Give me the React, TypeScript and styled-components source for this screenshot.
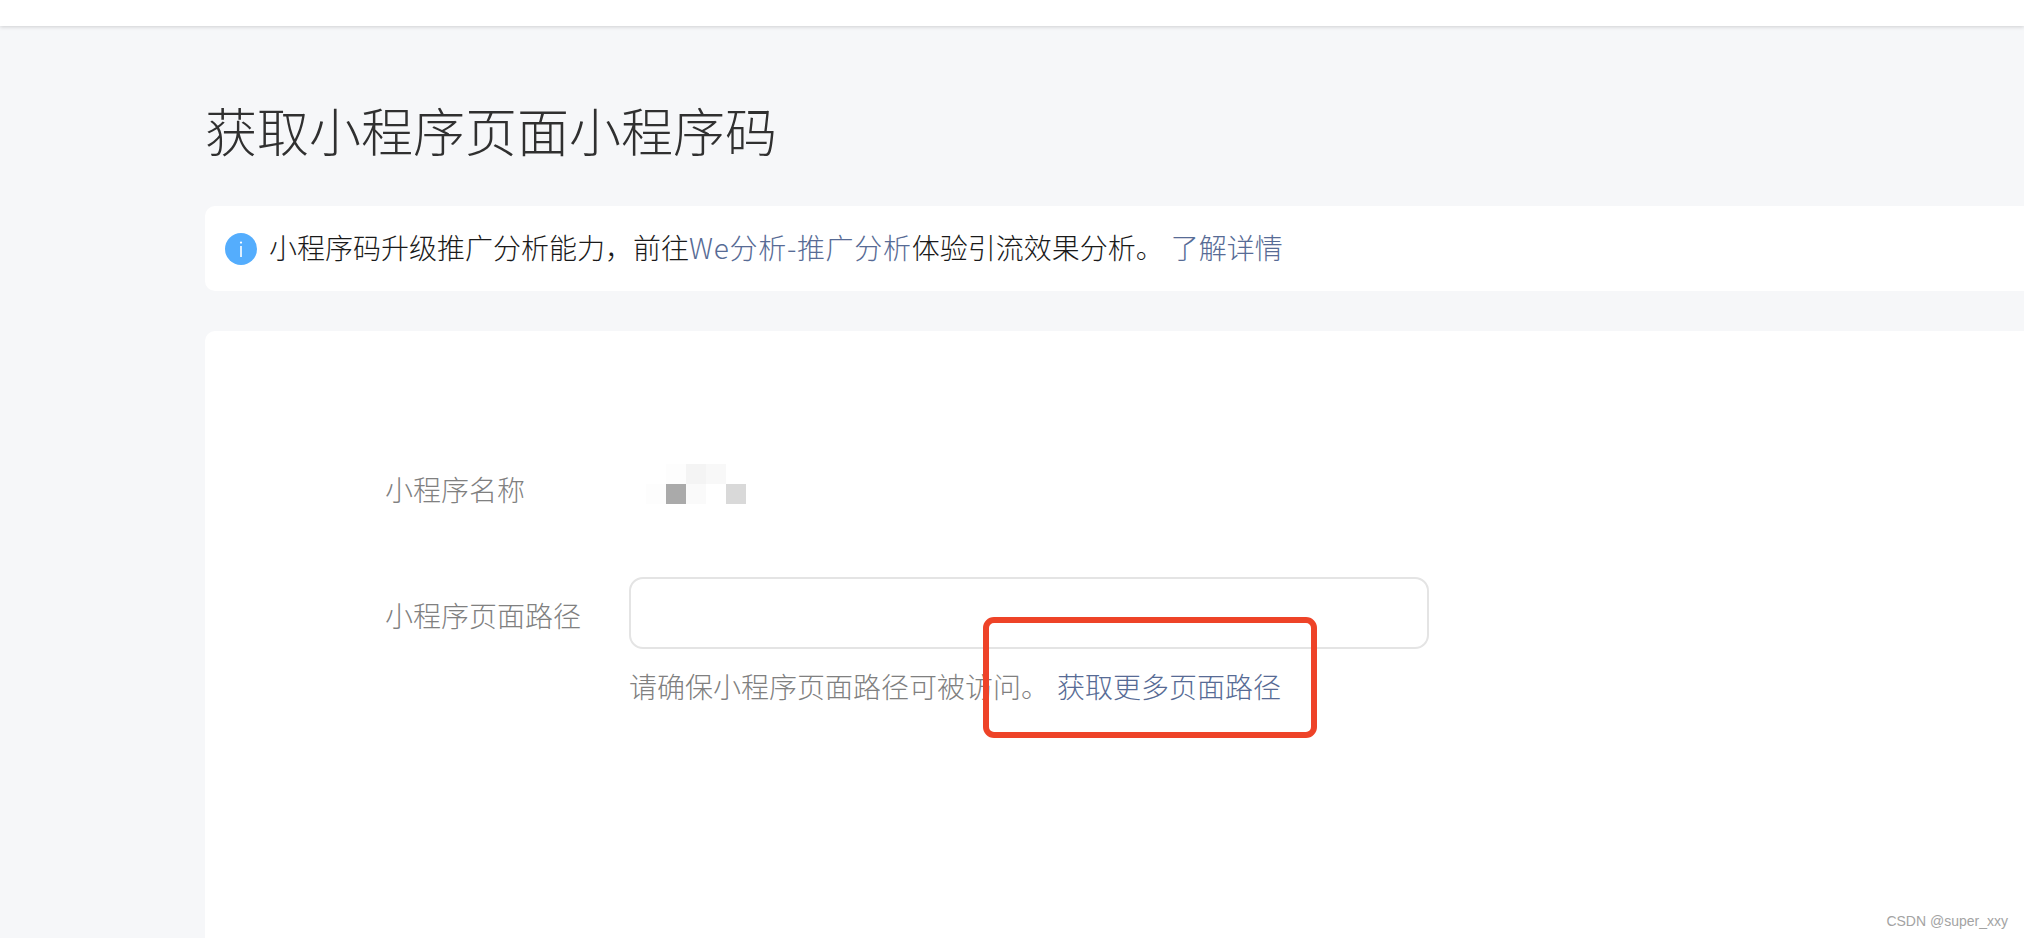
import React from 'react'
import styled, { createGlobalStyle } from 'styled-components'

const mosaicCells = [
  '#ffffff', '#fdfdfd', '#f4f4f4', '#f8f8f8', '#ffffff',
  '#fdfdfd', '#aaaaaa', '#fafafa', '#ffffff', '#d9d9d9',
]

export default function App() {
  return (
    <Page>
      <GlobalStyle />
      <TopBar />
      <Main>
        <Title>获取小程序页面小程序码</Title>
        <Notice>
          <InfoIcon viewBox="0 0 32 32">
            <circle cx="16" cy="16" r="16" fill="#54adfd" />
            <circle cx="16" cy="9.6" r="1.1" fill="#fff" />
            <rect x="15.2" y="13" width="1.6" height="11" fill="#fff" />
          </InfoIcon>
          <NoticeText>
            小程序码升级推广分析能力，前往<NoticeLink>We分析-推广分析</NoticeLink>体验引流效果分析。
            <NoticeMore>了解详情</NoticeMore>
          </NoticeText>
        </Notice>
        <Card>
          <NameRow>
            <NameLabel>小程序名称</NameLabel>
            <Mosaic>
              {mosaicCells.map((color, i) => (
                <MosaicCell key={i} $color={color} />
              ))}
            </Mosaic>
          </NameRow>
          <PathRow>
            <PathLabel>小程序页面路径</PathLabel>
            <Field>
              <PathInput />
              <Hint>
                请确保小程序页面路径可被访问。
                <HintLink>获取更多页面路径</HintLink>
              </Hint>
            </Field>
          </PathRow>
        </Card>
      </Main>
      <Highlight />
      <Watermark>CSDN @super_xxy</Watermark>
    </Page>
  )
}

const GlobalStyle = createGlobalStyle`
  html, body {
    margin: 0;
    padding: 0;
    height: 100%;
    overflow: hidden;
    background: #f6f7f9;
  }
  * { box-sizing: border-box; }
`

const Page = styled.div`
  position: relative;
  width: 2024px;
  height: 938px;
  overflow: hidden;
  display: flex;
  flex-direction: column;
  background: #f6f7f9;
  font-family: "Noto Sans CJK SC", "Liberation Sans", sans-serif;
  font-size: 28px;
  color: #353535;
`

const TopBar = styled.div`
  height: 26px;
  flex-shrink: 0;
  background: #fff;
  box-shadow: 0 1px 4px rgba(0, 0, 0, 0.16);
`

const Main = styled.main`
  flex: 1;
  min-height: 0;
  display: flex;
  flex-direction: column;
  padding: 68px 0 0 205px;
`

const Title = styled.h1`
  margin: 0 0 40px;
  font-size: 52px;
  line-height: 72px;
  font-weight: 300;
  color: #303030;
`

const Notice = styled.div`
  height: 85px;
  display: flex;
  align-items: center;
  gap: 12px;
  padding-left: 20px;
  margin-bottom: 40px;
  background: #fff;
  border-radius: 10px 0 0 10px;
`

const InfoIcon = styled.svg`
  width: 32px;
  height: 32px;
  flex-shrink: 0;
`

const NoticeText = styled.div`
  padding-bottom: 3px;
  line-height: 40px;
  font-weight: 300;
  color: #1a1a1a;
`

const Link = styled.span`
  color: #576b95;
`

const NoticeLink = styled(Link)`
  letter-spacing: 0.7px;
`

const NoticeMore = styled(Link)`
  margin-left: 7px;
`

const Card = styled.section`
  flex: 1;
  padding: 139px 0 0 180px;
  background: #fff;
  border-radius: 10px 0 0 0;
`

const Label = styled.div`
  width: 244px;
  flex-shrink: 0;
  line-height: 40px;
  font-weight: 300;
  color: #808080;
`

const NameLabel = styled(Label)`
  padding-bottom: 2px;
  line-height: 38px;
`

const NameRow = styled.div`
  display: flex;
  align-items: center;
  height: 40px;
  margin-bottom: 67px;
`

const Mosaic = styled.div`
  display: grid;
  grid-template-columns: repeat(5, 20px);
  grid-auto-rows: 20px;
  margin: 0 0 12px 17px;
`

const MosaicCell = styled.div<{ $color: string }>`
  background: ${(p) => p.$color};
`

const PathRow = styled.div`
  display: flex;
  align-items: flex-start;
`

const PathLabel = styled(Label)`
  padding-top: 18px;
`

const Field = styled.div`
  display: flex;
  flex-direction: column;
`

const PathInput = styled.div`
  width: 800px;
  height: 72px;
  background: #fff;
  border: 2px solid #e4e4e4;
  border-radius: 14px;
`

const Hint = styled.div`
  margin-top: 17px;
  line-height: 40px;
  font-weight: 300;
  color: #808080;
`

const HintLink = styled(Link)`
  margin-left: 8px;
`

const Highlight = styled.div`
  position: absolute;
  left: 983px;
  top: 617px;
  width: 334px;
  height: 121px;
  border: 6px solid #ee4328;
  border-radius: 11px;
`

const Watermark = styled.div`
  position: absolute;
  right: 16px;
  bottom: 9px;
  font-family: "Liberation Sans", sans-serif;
  font-size: 14px;
  line-height: 16px;
  color: #a3a3a3;
`
